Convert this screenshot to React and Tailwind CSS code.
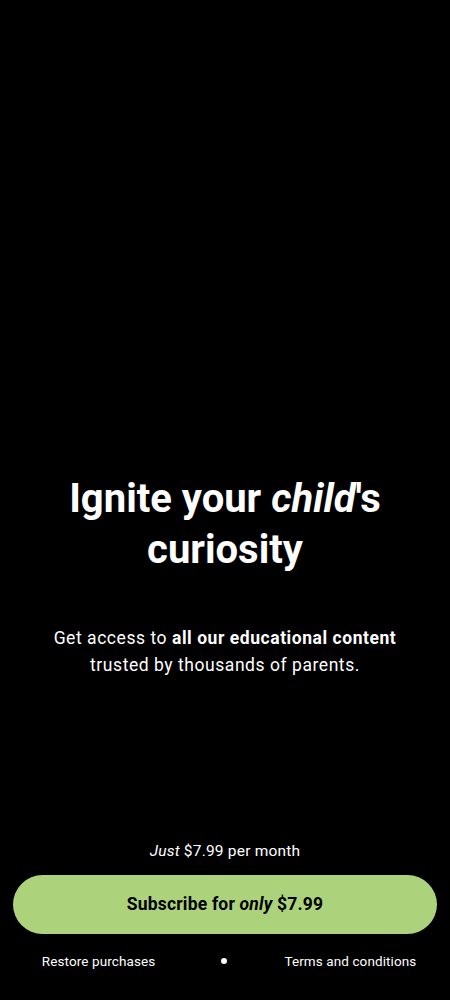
import React from 'react';

const App = () => {
  return (
    <div
      className="w-[450px] h-[1000px] bg-black text-white flex flex-col"
      style={{ fontFamily: 'Roboto, "Noto Sans", sans-serif' }}
    >
      {/* Titulo */}
      <div className="flex-1 flex flex-col items-center justify-end text-center">
        <h1 className="text-[40px] leading-[51px] font-bold tracking-[0px]">
          Ignite your <em className="italic">child</em>'s
          <br />
          curiosity
        </h1>
        <p className="mt-[50px] text-[17.5px] leading-[27px] tracking-[0.55px] text-white">
          Get access to <strong className="font-bold">all our educational content</strong>
          <br />
          trusted by thousands of parents.
        </p>
      </div>

      <div className="h-[161px]" />

      {/* Rodape */}
      <div className="flex flex-col items-center px-[13px]">
        <p className="text-[15.5px] leading-[22px] tracking-[0.2px]">
          <em className="italic">Just</em> $7.99 per month
        </p>
        <button className="mt-[13px] w-full h-[59px] rounded-full bg-[#acd37c] text-black text-[17.5px] font-bold tracking-[0.2px]">
          Subscribe for <em className="italic">only</em> $7.99
        </button>
        <div className="w-full mt-[17px] h-[20px] flex items-center text-[13.5px] tracking-[0.1px]">
          <span className="w-[172px] text-center">Restore purchases</span>
          <span className="w-[80px] flex justify-center">
            <span className="w-[6px] h-[6px] rounded-full bg-white" />
          </span>
          <span className="w-[174px] text-center">Terms and conditions</span>
        </div>
        <div className="h-[29px]" />
      </div>
    </div>
  );
};

export default App;
